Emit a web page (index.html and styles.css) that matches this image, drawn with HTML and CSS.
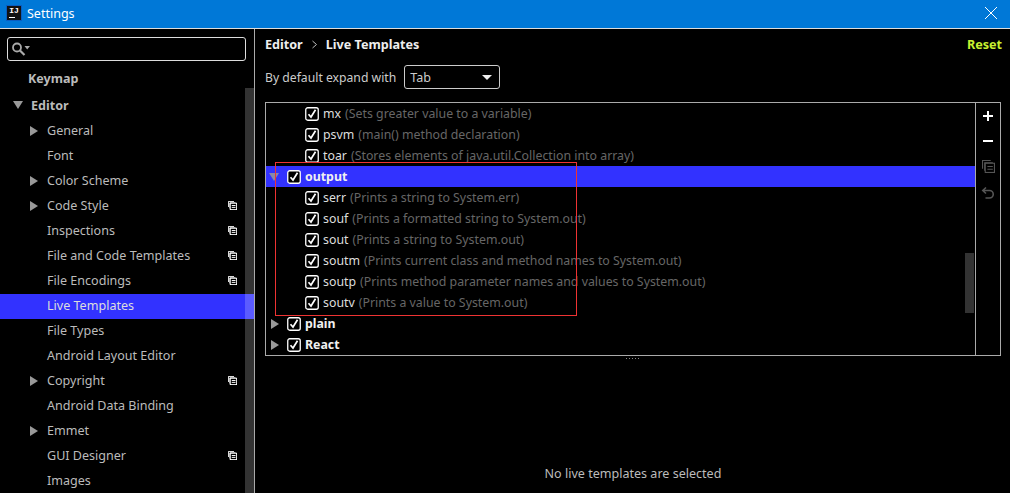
FILE: index.html

```html
<!DOCTYPE html>
<html lang="en">
<head>
    <meta charset="UTF-8">
    <title>Settings</title>
    <link rel="stylesheet" href="styles.css">
</head>
<body>
    <svg width="0" height="0" class="defs">
        <symbol id="check" viewBox="0 0 14 14">
            <rect x="0.75" y="0.75" width="12.5" height="12.5" rx="2" fill="#000" stroke="#fff" stroke-width="1.3"/>
            <path d="M3.5 7.2 L6 10 L10.5 2.8" fill="none" stroke="#fff" stroke-width="1.7"/>
        </symbol>
        <symbol id="copy" viewBox="0 0 12 12">
            <path d="M0.5 8V0.5H8M2.5 10V2.5H10" fill="none" stroke="currentColor"/>
            <rect x="3" y="3" width="8.5" height="8.5" fill="#000" stroke="currentColor"/>
            <path d="M5 6H10M5 8.5H10" stroke="currentColor"/>
        </symbol>
    </svg>

    <header class="titlebar">
        <div class="app-logo"><span>IJ</span><i></i></div>
        <span class="title">Settings</span>
        <svg class="close" width="14" height="14" viewBox="0 0 14 14"><path d="M1 1L13 13M13 1L1 13" stroke="#fff" stroke-width="1"/></svg>
    </header>

    <div class="main">
        <aside class="sidebar">
            <div class="search">
                <svg width="18" height="14" viewBox="0 0 18 14">
                    <circle cx="5" cy="5.5" r="4" fill="none" stroke="#aaa" stroke-width="1.8"/>
                    <path d="M8 8.5L12.5 13" stroke="#aaa" stroke-width="2.2"/>
                    <path d="M12.5 4H18L15.2 7.5Z" fill="#aaa"/>
                </svg>
            </div>
            <ul class="nav">
                <li class="top keymap"><span class="nav-label bold">Keymap</span></li>
                <li class="top editor"><span class="tri down"></span><span class="nav-label bold">Editor</span></li>
                <li><span class="tri right"></span><span class="nav-label">General</span></li>
                <li><span class="nav-label">Font</span></li>
                <li><span class="tri right"></span><span class="nav-label">Color Scheme</span></li>
                <li><span class="tri right"></span><span class="nav-label">Code Style</span><svg class="nav-copy"><use href="#copy"/></svg></li>
                <li><span class="nav-label">Inspections</span><svg class="nav-copy"><use href="#copy"/></svg></li>
                <li><span class="nav-label">File and Code Templates</span><svg class="nav-copy"><use href="#copy"/></svg></li>
                <li><span class="nav-label">File Encodings</span><svg class="nav-copy"><use href="#copy"/></svg></li>
                <li class="selected"><span class="nav-label">Live Templates</span></li>
                <li><span class="nav-label">File Types</span></li>
                <li><span class="nav-label">Android Layout Editor</span></li>
                <li><span class="tri right"></span><span class="nav-label">Copyright</span><svg class="nav-copy"><use href="#copy"/></svg></li>
                <li><span class="nav-label">Android Data Binding</span></li>
                <li><span class="tri right"></span><span class="nav-label">Emmet</span></li>
                <li><span class="nav-label">GUI Designer</span><svg class="nav-copy"><use href="#copy"/></svg></li>
                <li><span class="nav-label">Images</span></li>
            </ul>
            <div class="side-scroll"></div>
        </aside>

        <section class="content">
            <div class="crumbs">
                <span>Editor</span>
                <svg width="5" height="9" viewBox="0 0 5 9"><path d="M0.5 1L4.5 4.5L0.5 8" fill="none" stroke="#bbb"/></svg>
                <span>Live Templates</span>
                <a class="reset">Reset</a>
            </div>
            <div class="expand">
                <label>By default expand with</label>
                <div class="select"><span>Tab</span><i class="select-arrow"></i></div>
            </div>

            <div class="panel">
                <div class="tree">
                    <div class="row child"><svg class="check"><use href="#check"/></svg><b>mx</b><em>(Sets greater value to a variable)</em></div>
                    <div class="row child"><svg class="check"><use href="#check"/></svg><b>psvm</b><em>(main() method declaration)</em></div>
                    <div class="row child"><svg class="check"><use href="#check"/></svg><b>toar</b><em>(Stores elements of java.util.Collection into array)</em></div>
                    <div class="row group selected"><span class="tri down dim"></span><svg class="check"><use href="#check"/></svg><strong>output</strong></div>
                    <div class="row child"><svg class="check"><use href="#check"/></svg><b>serr</b><em>(Prints a string to System.err)</em></div>
                    <div class="row child"><svg class="check"><use href="#check"/></svg><b>souf</b><em>(Prints a formatted string to System.out)</em></div>
                    <div class="row child"><svg class="check"><use href="#check"/></svg><b>sout</b><em>(Prints a string to System.out)</em></div>
                    <div class="row child"><svg class="check"><use href="#check"/></svg><b>soutm</b><em>(Prints current class and method names to System.out)</em></div>
                    <div class="row child"><svg class="check"><use href="#check"/></svg><b>soutp</b><em>(Prints method parameter names and values to System.out)</em></div>
                    <div class="row child"><svg class="check"><use href="#check"/></svg><b>soutv</b><em>(Prints a value to System.out)</em></div>
                    <div class="row group"><span class="tri right"></span><svg class="check"><use href="#check"/></svg><strong>plain</strong></div>
                    <div class="row group"><span class="tri right"></span><svg class="check"><use href="#check"/></svg><strong>React</strong></div>
                    <div class="tree-scroll"></div>
                    <div class="red-box"></div>
                </div>
                <div class="tools">
                    <svg width="12" height="12" viewBox="0 0 12 12"><path d="M6 1V11M1 6H11" stroke="#fff" stroke-width="2"/></svg>
                    <svg width="12" height="12" viewBox="0 0 12 12"><path d="M1 6H11" stroke="#fff" stroke-width="2"/></svg>
                    <svg class="tool-off" width="13" height="13"><use href="#copy"/></svg>
                    <svg width="14" height="14" viewBox="0 0 14 14"><path d="M5 1.5L1.8 4.5L5 7.5M2 4.5H8.5A3.6 3.6 0 0 1 8.5 12H4.5" fill="none" stroke="#555" stroke-width="1.6"/></svg>
                </div>
            </div>
            <div class="splitter"></div>
            <p class="empty">No live templates are selected</p>
        </section>
    </div>
</body>
</html>
```

FILE: styles.css

```css
html, body {
    height: 100%;
}

body {
    margin: 0;
    background: #000;
    color: #bbb;
    font-family: "Noto Sans", Arial, sans-serif;
    font-size: 12.55px;
    overflow: hidden;
}

.defs {
    position: absolute;
}

.titlebar {
    display: flex;
    align-items: center;
    box-sizing: border-box;
    height: 29px;
    background: #0078d7;
    color: #fff;
    border-bottom: 1px solid #ddd;
    padding: 0 12px 2px 7px;
    font-size: 12.5px;
}

.app-logo {
    position: relative;
    box-sizing: border-box;
    width: 14px;
    height: 14px;
    margin-right: 6px;
    padding-top: 1px;
    background: #111;
    outline: 1px solid #0a5cc0;
    color: #fff;
    font: bold 8px/8px "Liberation Mono", monospace;
    text-align: center;
}

.app-logo i {
    position: absolute;
    left: 2px;
    bottom: 2px;
    width: 6px;
    height: 1px;
    background: #fff;
}

.title {
    flex: 1;
}

.main {
    display: flex;
    height: 464px;
}

.sidebar {
    position: relative;
    width: 254px;
    border-right: 1px solid #aaa;
    padding-top: 8px;
    overflow: hidden;
}

.search {
    display: flex;
    align-items: center;
    box-sizing: border-box;
    width: 239px;
    height: 24px;
    margin-left: 7px;
    padding-left: 4px;
    border: 1px solid #ddd;
    border-radius: 3px;
}

.nav {
    list-style: none;
    margin: 6px 0 0;
    padding: 0;
}

.nav li {
    position: relative;
    box-sizing: border-box;
    display: flex;
    align-items: center;
    height: 25px;
    padding: 0 0 3px 47px;
    color: #bbb;
    white-space: nowrap;
}

.nav li.top {
    padding-left: 31px;
}

.nav li.keymap {
    height: 24px;
    padding-bottom: 1px;
    padding-left: 28px;
}

.nav li.editor {
    height: 28px;
    padding-bottom: 0;
}

.nav li.selected {
    background: #3232ff;
    color: #ddd;
}

.nav-label.bold {
    font-weight: bold;
}

.nav-copy {
    position: absolute;
    left: 228px;
    top: 7px;
    width: 9px;
    height: 9px;
    color: #fff;
    stroke-width: 1.3;
}

.tri {
    position: absolute;
    width: 0;
    height: 0;
    border-style: solid;
    border-color: transparent;
}

.tri.right {
    left: 30px;
    top: 50%;
    margin-top: -6px;
    border-width: 5px 0 5px 8px;
    border-left-color: #999;
}

.tri.down {
    left: 13px;
    top: 50%;
    margin-top: -4px;
    border-width: 8px 5px 0 5px;
    border-top-color: #999;
}

.side-scroll {
    position: absolute;
    top: 59px;
    bottom: 0;
    left: 245px;
    width: 9px;
    background: rgba(255, 255, 255, 0.2);
}

.content {
    flex: 1;
    padding: 0 9px 0 10px;
    min-width: 0;
}

.crumbs {
    display: flex;
    align-items: center;
    gap: 9px;
    height: 31px;
    color: #eee;
    font-size: 12.6px;
    font-weight: bold;
}

.reset {
    margin-left: auto;
    margin-right: -1px;
    color: #c8f030;
}

.expand {
    display: flex;
    align-items: center;
    gap: 8px;
    height: 24px;
    margin-top: 5px;
    color: #ccc;
    font-size: 12.2px;
}

.select {
    display: flex;
    align-items: center;
    justify-content: space-between;
    box-sizing: border-box;
    width: 96px;
    height: 24px;
    padding: 0 4px 0 5px;
    border: 1px solid #ccc;
    border-radius: 3px;
    font-size: 12.55px;
}

.select-arrow {
    width: 0;
    height: 0;
    margin-right: 3px;
    border-style: solid;
    border-width: 5px 5px 0 5px;
    border-color: #eee transparent transparent;
}

.panel {
    display: flex;
    height: 252px;
    margin-top: 13px;
    border: 1px solid #aaa;
}

.tree {
    position: relative;
    flex: 1;
    min-width: 0;
    border-right: 1px solid #aaa;
    font-size: 12.35px;
}

.row {
    position: relative;
    box-sizing: border-box;
    display: flex;
    align-items: center;
    height: 21px;
    white-space: nowrap;
}

.row.child {
    padding-left: 39px;
}

.row.group {
    padding-left: 21px;
}

.row.selected {
    background: #3232ff;
}

.row .tri.right {
    left: 5px;
    margin-top: -5px;
}

.row .tri.down {
    left: 3px;
    margin-top: -4px;
}

.tri.dim {
    border-top-color: #8888aa;
}

.check {
    flex: none;
    width: 14px;
    height: 14px;
    margin-right: 4px;
}

.row b {
    font-weight: normal;
    color: #ddd;
    margin-right: 4px;
}

.row em {
    font-style: normal;
    color: #666;
}

.row strong {
    color: #f0f0f0;
}

.tree-scroll {
    position: absolute;
    left: 699px;
    top: 150px;
    width: 9px;
    height: 60px;
    background: #333;
}

.red-box {
    position: absolute;
    left: 9px;
    top: 59px;
    width: 300px;
    height: 152px;
    border: 1px solid #e33;
}

.tools {
    display: flex;
    flex-direction: column;
    align-items: center;
    gap: 13px;
    width: 24px;
    padding-top: 7px;
}

.tool-off {
    color: #555;
}

.splitter {
    width: 16px;
    height: 3px;
    margin: 1px 0 0 360px;
    background: radial-gradient(circle, #888 0.6px, transparent 0.9px) 0 0 / 3px 3px;
}

.empty {
    margin: 105px 0 0;
    text-align: center;
    color: #bbb;
}
```
